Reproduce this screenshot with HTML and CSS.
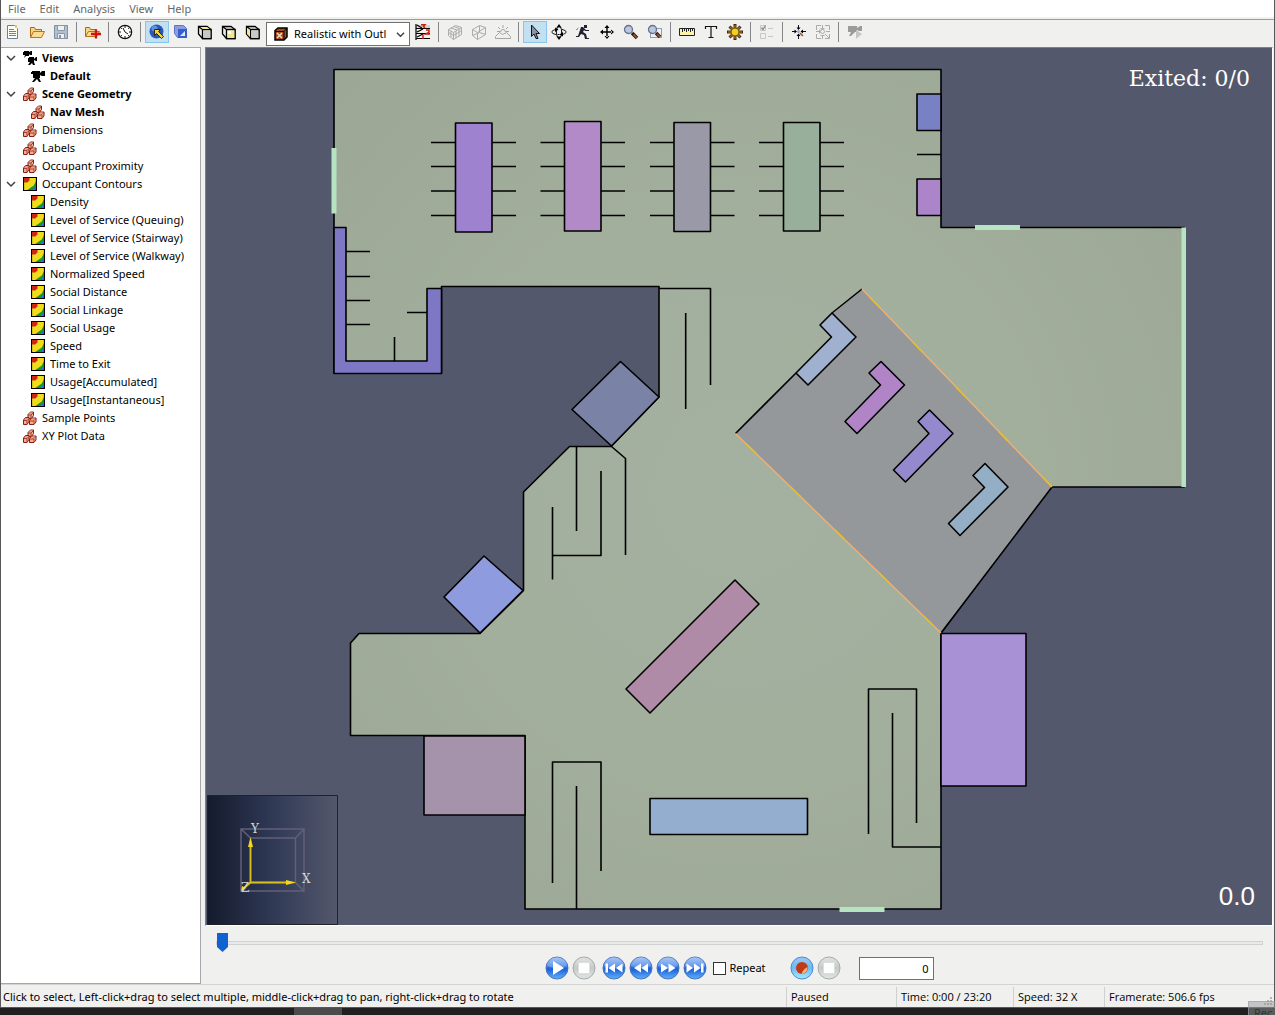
FILE: index.html
```html
<!DOCTYPE html>
<html lang="en">
<head>
<meta charset="utf-8">
<title>Results viewer</title>
<link rel="stylesheet" href="styles.css">
</head>
<body>
<svg class="sprite" aria-hidden="true">
  <defs>
    <linearGradient id="blueGlass" x1="0" y1="0" x2="0" y2="1"><stop offset="0" stop-color="#8fb6f4"/><stop offset=".45" stop-color="#2f74e4"/><stop offset=".55" stop-color="#1b5fdc"/><stop offset="1" stop-color="#5fb4fa"/></linearGradient>
    <linearGradient id="greyGlass" x1="0" y1="0" x2="0" y2="1"><stop offset="0" stop-color="#e2e4e2"/><stop offset=".5" stop-color="#c6cac7"/><stop offset="1" stop-color="#dfe5e6"/></linearGradient>
    <linearGradient id="cyanGlass" x1="0" y1="0" x2="0" y2="1"><stop offset="0" stop-color="#9cc8f2"/><stop offset=".5" stop-color="#6db9f5"/><stop offset="1" stop-color="#a4ecff"/></linearGradient>
    <g id="cubeArt"><path d="M1.500 2.500v7.500l4 4.500h8.500v-9l-4-3z" fill="#e9e9e4" stroke="#000" stroke-width="1.300"/><path d="M5.500 5.500h8.500v9h-8.500zM1.500 2.500l4 3" stroke="#000" stroke-width="1.300"/></g>
  </defs>
  <symbol id="i-blocks" viewBox="0 0 14 14"><g fill="#f0b088" stroke="#8c1c1c" stroke-linejoin="round"><path d="M5 3.500l2.500-2.500h3l0 3.500-2 3H5z"/><path d="M.5 9l2-2.500h3.500v4l-2 3H.5z"/><path d="M6.500 9.500l2-2.500h4.500v4l-2 2.500H6.500z"/></g><path fill="none" stroke="#a8412f" d="M5 4h3v3M8 4l2-2M1 9.500h3v4M4 9.500l2-2M7 10h4v3M11 9.500l2-2"/><path fill="#d8a0a0" d="M6 3l1.500-1.500H10L8 3.300zM2 8.500L3 7h2.500L4 8.800zM8 9l1-1.500h3L11 9z"/></symbol>
  <symbol id="i-contour" viewBox="0 0 13 13"><path fill="#169a1c" d="M0 0h13v13H0z"/><path fill="#f1dc1c" d="M1 1h11v3l-2 4-3 2-3 2H1z"/><path fill="#d22414" d="M1 1h5v2L4 5H1z"/><path fill="#2a6ff0" d="M12 8v4H8z"/><path fill="none" stroke="#000" d="M.5.5h12v12H.5z"/></symbol>
  <symbol id="i-camera" viewBox="0 0 14 12"><path d="M1 1h8v2l2-2h3v5h-3L9 5v3H8l2 4H8L6 9l-3 3H1l3-4H2V4H0V2h1z"/></symbol>
  <symbol id="i-cameras" viewBox="0 0 14 14"><path d="M1 0h5v1l2-1h1v4H7L6 3v2H3L1 7l1-3H0V1h1zM6 6h5v2l2-2h1v4h-1l-2-1v2l1 3h-2l-1-2-2 2H5l2-3H5V7h1z"/></symbol>
  <symbol id="i-doc" viewBox="0 0 16 16"><path fill="#fffef4" stroke="#6e7f9d" d="M2.500 1.500h7l3 3v10h-10z"/><path fill="#e7c765" d="M10 1h2v3h-2z"/><path stroke="#5c80c4" d="M4 5.500h5M4 7.500h7M4 9.500h7M4 11.500h7"/></symbol>
  <symbol id="i-open" viewBox="0 0 16 16"><path fill="#f5d488" stroke="#a76b1d" d="M1.500 13.500v-10h4l1 2h6v3"/><path fill="#ffda91" stroke="#b8741c" d="M1.500 13.500l3-6h11l-3 6z"/></symbol>
  <symbol id="i-save" viewBox="0 0 16 16"><path fill="#b4c0ce" stroke="#8090a2" d="M1.500 1.500h13v13h-13z"/><path fill="#eef1f2" stroke="#8796a8" d="M4.500 1.500h7v5h-7zM4.500 9.500h7v5h-7z"/><path fill="#8796a8" d="M6 11h2v3H6z"/></symbol>
  <symbol id="i-import" viewBox="0 0 16 16"><path fill="#f5d488" stroke="#a76b1d" d="M.5 12.500v-9h4l1 2h6v3"/><path fill="#ffda91" stroke="#b8741c" d="M.5 12.500l3-5h11l-3 5z"/><path d="M11 5.500v9M6 10h10" stroke="#d01414" stroke-width="2.400"/></symbol>
  <symbol id="i-clock" viewBox="0 0 16 16"><circle cx="8" cy="8" r="6.700" fill="#fff" stroke="#111" stroke-width="1.200"/><path fill="none" stroke="#111" d="M8 2v2M8 12v2M2 8h2M12 8h2M3.800 3.800l1 1M12.200 3.800l-1 1M3.800 12.200l1-1M12.200 12.200l-1-1M6 4l2 4 3 2"/></symbol>
  <symbol id="i-orb" viewBox="0 0 16 16"><circle cx="7.500" cy="7.500" r="7" fill="#2858b8"/><circle cx="5.500" cy="4.500" r="3" fill="#5c91e0"/><path fill="#f3d43c" stroke="#31280a" d="M5.500 5.500h6l-2 2 5 5-2 2-5-5-2 2z"/></symbol>
  <symbol id="i-bluecube" viewBox="0 0 16 16"><path fill="#8c9be2" stroke="#6074c6" d="M1.500 1.500h9l3 3v9h-9l-3-4z"/><path fill="#3460cc" d="M5 5h9v9H5z"/><path fill="#dce6ff" d="M7 12l5-5v5z"/></symbol>
  <symbol id="i-cubetop" viewBox="0 0 16 16"><g fill="none"><use href="#cubeArt"/><path fill="#c8c8c6" d="M6.500 6.500h7v7.500h-7z"/><path fill="#f4e68c" d="M3.500 3h6.500l2.500 2H6z"/></g></symbol>
  <symbol id="i-cubefront" viewBox="0 0 16 16"><g fill="none"><use href="#cubeArt"/><path fill="#f4e68c" d="M6.500 6.500h7v7.500h-7z"/><path fill="#fff" d="M7 7h3v3H7z"/></g></symbol>
  <symbol id="i-cubeside" viewBox="0 0 16 16"><g fill="none"><use href="#cubeArt"/><path fill="#c8c8c6" d="M6.500 6.500h7v7.500h-7z"/><path fill="#f4e68c" d="M2 4L5 6v7l-3-3z"/></g></symbol>
  <symbol id="i-brick" viewBox="0 0 14 14"><path fill="#a24c1d" stroke="#000" stroke-width="1.500" d="M1 3.500L4 1h9v9l-3 3H1z"/><path fill="none" stroke="#000" d="M1 4.500h9V13M10 4.500L13 1"/><path stroke="#f5d9c4" stroke-width="1.500" d="M3 6l5 5M8 6l-5 5"/></symbol>
  <symbol id="i-levels" viewBox="0 0 16 16"><path fill="#d2d2d0" d="M1 1h14v3H1z"/><path fill="none" stroke="#000" stroke-width="1.200" d="M1 0v16M1 4.500h14M1 9.500h14M1 14.500h14M2 1l5 3M2 8l6-3M2 13l6-3"/><path fill="none" stroke="#d01c10" stroke-width="1.500" d="M6 .8h4L8.500 2.500 10 4M11 6h3v2l-3 2h4M8 10.500V15"/></symbol>
  <symbol id="i-wiremesh" viewBox="0 0 16 16"><path fill="none" stroke="#a9adaa" d="M1.500 5.500l5 3v7l-5-4zM1.500 5.500l7-4 6 2v7l-8 5M6.500 8.500l8-5M4 7v6M1.500 8.500l5 3 8-5M9 7v7M12 5v7M4 4l6 2M7 2.500l5 2"/></symbol>
  <symbol id="i-wire" viewBox="0 0 16 16"><path fill="none" stroke="#a9adaa" d="M1.500 5.500l5 3v7l-5-4zM1.500 5.500l7-4 6 2v7l-8 5M6.500 8.500l8-5M8.500 1.500v7l-7 3M8.500 8.500l6 2"/></symbol>
  <symbol id="i-sunrise" viewBox="0 0 16 16"><path fill="none" stroke="#a3a6a4" d="M.5 14.500v-2l4-4 3 2 4-2 4 4v2zM8 1v3M3 3l2 2M13 3l-2 2M2 7.500h3M11 7.500h3M5.500 8a2.500 2.500 0 015 0"/></symbol>
  <symbol id="i-arrow" viewBox="0 0 16 16"><path fill="#8c8fa6" stroke="#111" d="M4.500 1v11.500l2.500-2.500 2 4.500h2l-2-5h3.500z"/></symbol>
  <symbol id="i-orbit" viewBox="0 0 16 16"><path fill="none" stroke="#111" d="M6.500 3C5 5 5 11 6.500 13M9.500 3c1.500 2 1.500 8 0 10M5 10.500C-.5 9.500-.5 6.500 5 5.500M11 5.500c5.500 1 5.500 4 0 5M6.500 10.500h2"/><path d="M4 3.500l3.500 2L4 8zM12 12.500L8.500 10.500 12 8zM5.500 3.500h5L8 0zM5.500 12.500h5L8 16z"/></symbol>
  <symbol id="i-run" viewBox="0 0 16 16"><path fill="#222131" d="M9 1h3v3H9zM4 3h4l3 3h3v1h-4L9 6 8 8l3 2 1 4h2v1h-4l-1-4-3-1-2 3H1v-1h2l2-6 1-3H4L2 6H1z"/></symbol>
  <symbol id="i-move" viewBox="0 0 16 16"><path d="M7.300 3h1.400v10H7.300zM3 7.300h10v1.400H3zM8 1l2.500 3h-5zM8 15l2.500-3h-5zM1 8l3-2.500v5zM15 8l-3-2.500v5z"/></symbol>
  <symbol id="i-zoom" viewBox="0 0 16 16"><path stroke="#321c14" stroke-width="3.600" d="M9 9l5 5"/><path stroke="#9a5a33" stroke-width="1.600" d="M10.500 10.500l3 3"/><circle cx="5.500" cy="5.500" r="4" fill="#b9c8e0" stroke="#69728c" stroke-width="1.300"/></symbol>
  <symbol id="i-zoombox" viewBox="0 0 16 16"><path fill="none" stroke="#344b8c" stroke-dasharray="1 1" d="M3.500 4.500h11v9h-11z"/><path stroke="#321c14" stroke-width="3.600" d="M9 9l4 4"/><path stroke="#9a5a33" stroke-width="1.600" d="M10 10l3 3"/><circle cx="5.500" cy="5.500" r="4" fill="#b9c8e0" stroke="#69728c" stroke-width="1.300"/></symbol>
  <symbol id="i-ruler" viewBox="0 0 16 16"><path fill="#fdf3ae" stroke="#222" d="M.5 4.500h15v7H.5z"/><path stroke="#222" d="M3.500 5v3M5.500 5v2M7.500 5v3M9.500 5v2M11.500 5v3M13.500 5v2"/></symbol>
  <symbol id="i-type" viewBox="0 0 16 16"><path fill="none" stroke="#111" stroke-width="1.200" d="M2.500 5V2.500h11V5M8 2.500v11M5.500 13.500h5"/></symbol>
  <symbol id="i-gear" viewBox="0 0 16 16"><path stroke="#3b2a10" stroke-width="3" d="M8 0v16M0 8h16M2.500 2.500l11 11M13.500 2.500l-11 11"/><path stroke="#a4641e" stroke-width="1.400" d="M8 1v14M1 8h14M3 3l10 10M13 3L3 13"/><circle cx="8" cy="8" r="4" fill="#f4cf1c" stroke="#6c5310"/></symbol>
  <symbol id="i-checks" viewBox="0 0 16 16"><path fill="none" stroke="#c3c8c4" d="M1.500 1.500h5v5h-5zM1.500 9.500h5v5h-5zM9 4.500h5M9 12.500h5"/><path fill="none" stroke="#8b8f8c" stroke-width="1.400" d="M2.500 3.500l1.500 2 2.500-4"/></symbol>
  <symbol id="i-focus" viewBox="0 0 16 16"><path stroke="#111" d="M7.500 1v4M7.500 11v4M1 7.500h4M11 7.500h4"/><path d="M5.500 3.500h4L7.500 6zM5.500 12h4l-2-2.500zM3.500 5.500v4L6 7.500zM12 5.500v4L9.500 7.500z"/><circle cx="7.500" cy="7.500" r="1.500" fill="#93a9cf"/><path stroke="#8f5937" stroke-width="1.500" d="M9 9l3 3"/></symbol>
  <symbol id="i-expand" viewBox="0 0 16 16"><path fill="none" stroke="#a9adaa" d="M1.500 6V1.500H6M10 1.500h4.500V6M14.500 10v4.500H10M6 14.500H1.500V10M7.500 1v4M7.500 11v4M1 7.500h4M11 7.500h4M5.500 4.500h4M5.500 11.500h4M4.500 5.500v4M10 10l4 4"/><circle cx="7.500" cy="7.500" r="2" fill="none" stroke="#a9adaa"/></symbol>
  <symbol id="i-greycam" viewBox="0 0 16 16"><path fill="#9a9c9a" d="M1 2h9v2l3-2h2v5h-3l-2-1v2H8l-4 4H2l2-4H1z"/><path fill="#c4c6c4" d="M9 6l6 4-6 5z"/></symbol>
  <symbol id="i-chev" viewBox="0 0 10 10"><path fill="none" stroke="#404040" stroke-width="1.500" d="M1 3l4 4 4-4"/></symbol>
  <symbol id="p-blue" viewBox="0 0 24 24"><circle cx="12" cy="12" r="11" fill="url(#blueGlass)" stroke="#4a74b8"/><path fill="#fff" opacity=".25" d="M2 10a10 9 0 0120 0q-10 4-20 0z"/></symbol>
  <symbol id="p-grey" viewBox="0 0 24 24"><circle cx="12" cy="12" r="11" fill="url(#greyGlass)" stroke="#a6abab"/><path fill="#fdfdfd" stroke="#dcdede" d="M6.500 6.500h11v11h-11z"/></symbol>
</svg>

<div class="window">
  <nav class="menubar" aria-label="Main menu">
    <button type="button">File</button><button type="button">Edit</button><button type="button">Analysis</button><button type="button">View</button><button type="button">Help</button>
  </nav>

  <div class="toolbar" role="toolbar" aria-label="Tools">
    <button type="button" class="tool" aria-label="New"><svg><use href="#i-doc"/></svg></button>
    <button type="button" class="tool" aria-label="Open"><svg><use href="#i-open"/></svg></button>
    <button type="button" class="tool" aria-label="Save"><svg><use href="#i-save"/></svg></button>
    <span class="sep"></span>
    <button type="button" class="tool" aria-label="Import"><svg><use href="#i-import"/></svg></button>
    <span class="sep"></span>
    <button type="button" class="tool" aria-label="Time"><svg><use href="#i-clock"/></svg></button>
    <span class="sep"></span>
    <button type="button" class="tool active" aria-label="Select objects"><svg><use href="#i-orb"/></svg></button>
    <button type="button" class="tool" aria-label="Solid"><svg><use href="#i-bluecube"/></svg></button>
    <button type="button" class="tool" aria-label="Top view"><svg><use href="#i-cubetop"/></svg></button>
    <button type="button" class="tool" aria-label="Front view"><svg><use href="#i-cubefront"/></svg></button>
    <button type="button" class="tool" aria-label="Side view"><svg><use href="#i-cubeside"/></svg></button>
    <label class="mode">
      <svg class="mode-icon"><use href="#i-brick"/></svg>
      <select aria-label="Render mode"><option>Realistic with Outl</option></select>
      <svg class="mode-chev"><use href="#i-chev"/></svg>
    </label>
    <button type="button" class="tool" aria-label="Floors"><svg><use href="#i-levels"/></svg></button>
    <span class="sep"></span>
    <button type="button" class="tool" aria-label="Mesh"><svg><use href="#i-wiremesh"/></svg></button>
    <button type="button" class="tool" aria-label="Wireframe"><svg><use href="#i-wire"/></svg></button>
    <button type="button" class="tool" aria-label="Lighting"><svg><use href="#i-sunrise"/></svg></button>
    <span class="sep"></span>
    <button type="button" class="tool active" aria-label="Select"><svg><use href="#i-arrow"/></svg></button>
    <button type="button" class="tool" aria-label="Orbit"><svg><use href="#i-orbit"/></svg></button>
    <button type="button" class="tool" aria-label="Roam"><svg><use href="#i-run"/></svg></button>
    <button type="button" class="tool" aria-label="Pan"><svg><use href="#i-move"/></svg></button>
    <button type="button" class="tool" aria-label="Zoom"><svg><use href="#i-zoom"/></svg></button>
    <button type="button" class="tool" aria-label="Zoom box"><svg><use href="#i-zoombox"/></svg></button>
    <span class="sep"></span>
    <button type="button" class="tool" aria-label="Measure"><svg><use href="#i-ruler"/></svg></button>
    <button type="button" class="tool" aria-label="Text label"><svg><use href="#i-type"/></svg></button>
    <button type="button" class="tool" aria-label="Settings"><svg><use href="#i-gear"/></svg></button>
    <span class="sep"></span>
    <button type="button" class="tool" aria-label="Options"><svg><use href="#i-checks"/></svg></button>
    <span class="sep"></span>
    <button type="button" class="tool" aria-label="Focus selected"><svg><use href="#i-focus"/></svg></button>
    <button type="button" class="tool" aria-label="Fit all"><svg><use href="#i-expand"/></svg></button>
    <span class="sep"></span>
    <button type="button" class="tool" aria-label="Camera"><svg><use href="#i-greycam"/></svg></button>
  </div>

  <div class="main">
    <aside class="tree" aria-label="Navigation">
      <ul>
        <li class="row bold"><svg class="chev"><use href="#i-chev"/></svg><svg class="ico"><use href="#i-cameras"/></svg>Views</li>
        <li class="row bold child"><span class="chev"></span><svg class="ico"><use href="#i-camera"/></svg>Default</li>
        <li class="row bold"><svg class="chev"><use href="#i-chev"/></svg><svg class="ico"><use href="#i-blocks"/></svg>Scene Geometry</li>
        <li class="row bold child"><span class="chev"></span><svg class="ico"><use href="#i-blocks"/></svg>Nav Mesh</li>
        <li class="row"><span class="chev"></span><svg class="ico"><use href="#i-blocks"/></svg>Dimensions</li>
        <li class="row"><span class="chev"></span><svg class="ico"><use href="#i-blocks"/></svg>Labels</li>
        <li class="row"><span class="chev"></span><svg class="ico"><use href="#i-blocks"/></svg>Occupant Proximity</li>
        <li class="row"><svg class="chev"><use href="#i-chev"/></svg><svg class="ico"><use href="#i-contour"/></svg>Occupant Contours</li>
        <li class="row child"><span class="chev"></span><svg class="ico"><use href="#i-contour"/></svg>Density</li>
        <li class="row child"><span class="chev"></span><svg class="ico"><use href="#i-contour"/></svg>Level of Service (Queuing)</li>
        <li class="row child"><span class="chev"></span><svg class="ico"><use href="#i-contour"/></svg>Level of Service (Stairway)</li>
        <li class="row child"><span class="chev"></span><svg class="ico"><use href="#i-contour"/></svg>Level of Service (Walkway)</li>
        <li class="row child"><span class="chev"></span><svg class="ico"><use href="#i-contour"/></svg>Normalized Speed</li>
        <li class="row child"><span class="chev"></span><svg class="ico"><use href="#i-contour"/></svg>Social Distance</li>
        <li class="row child"><span class="chev"></span><svg class="ico"><use href="#i-contour"/></svg>Social Linkage</li>
        <li class="row child"><span class="chev"></span><svg class="ico"><use href="#i-contour"/></svg>Social Usage</li>
        <li class="row child"><span class="chev"></span><svg class="ico"><use href="#i-contour"/></svg>Speed</li>
        <li class="row child"><span class="chev"></span><svg class="ico"><use href="#i-contour"/></svg>Time to Exit</li>
        <li class="row child"><span class="chev"></span><svg class="ico"><use href="#i-contour"/></svg>Usage[Accumulated]</li>
        <li class="row child"><span class="chev"></span><svg class="ico"><use href="#i-contour"/></svg>Usage[Instantaneous]</li>
        <li class="row"><span class="chev"></span><svg class="ico"><use href="#i-blocks"/></svg>Sample Points</li>
        <li class="row"><span class="chev"></span><svg class="ico"><use href="#i-blocks"/></svg>XY Plot Data</li>
      </ul>
    </aside>

    <section class="viewer">
      <div class="stage">
        <svg class="plan" viewBox="206 48 1066 875" preserveAspectRatio="xMidYMin meet" role="img" aria-label="Floor plan">
          <defs>
            <radialGradient id="floor" gradientUnits="userSpaceOnUse" cx="740" cy="490" r="560"><stop offset="0" stop-color="#a3b1a1"/><stop offset=".5" stop-color="#a3af9d"/><stop offset="1" stop-color="#9ca895"/></radialGradient>
          </defs>
          <g class="outlined">
            <path fill="url(#floor)" d="M334 69.500H941V227.500H1184V487H1051L941 633V909H525V735.500H350.500V643L359 633.500H480L523.500 590.500V492L569.500 446.500H611L659 397V286.500H441.500V373H334z"/>
            <path fill="#7e77c3" d="M334 227.500H346V361H427V288.500H441.500V373.500H334z"/>
            <path fill="#9f82cf" d="M455.500 123H492V232H455.500z"/>
            <path fill="#b18ac7" d="M564.500 121.500H601V231H564.500z"/>
            <path fill="#9999a7" d="M674 122.500H710.500V231.500H674z"/>
            <path fill="#98b09b" d="M783.500 122.500H820V231H783.500z"/>
            <path fill="#7881c4" d="M917 94H941V130.500H917z"/>
            <path fill="#ac84ca" d="M917 179H941V215.500H917z"/>
            <path fill="#7a82a5" d="M620.500 361.500L659 397L611.500 446L572 409.500z"/>
            <path fill="#8e9bdf" d="M484 556L523 590.500L480 633L444 597z"/>
            <path fill="#a593ac" d="M424 736H525V815H424z"/>
            <path fill="#94aecf" d="M650 798.500H807.500V834.500H650z"/>
            <path fill="#b08ba8" d="M735 580L759 604L650 713L626 689z"/>
            <path fill="#a892d5" d="M941 633.500H1026V786H941z"/>
          </g>
          <path fill="#95989b" d="M862 289L1052 487L941 633L735 433.500L796 373L820 325z"/>
          <path fill="url(#floor)" d="M796 373L831.500 337L820 325L800 345z"/>
          <g class="outlined">
            <path fill="none" d="M862 289L832 313M796 373L735.500 433.500M1052 487L941 633"/>
            <path fill="#a0b1d0" d="M832 313L856 337L808 385L796 373L831.500 337L820 325z"/>
            <path fill="#b184c8" d="M881 361.500L904.500 385L857 433.500L845 421.500L880.500 385L869 373z"/>
            <path fill="#9489cd" d="M929.500 410L953 433.500L905.500 482L893.500 470L929 433.500L918 421.500z"/>
            <path fill="#93aec5" d="M985 463.500L1008 487L960 535.500L948.500 523.500L984.500 487.500L973 475.500z"/>
            <path fill="none" d="M431 142.500h24M431 166.500h24M431 191h24M431 215.500h24M492 142.500h24M492 166.500h24M492 191h24M492 215.500h24M540.500 142.500h24M540.500 166.500h24M540.500 191h24M540.500 215.500h24M601 142.500h24M601 166.500h24M601 191h24M601 215.500h24M650 142.500h24M650 166.500h24M650 191h24M650 215.500h24M710.500 142.500h24M710.500 166.500h24M710.500 191h24M710.500 215.500h24M759 142.500h24M759 166.500h24M759 191h24M759 215.500h24M820 142.500h24M820 166.500h24M820 191h24M820 215.500h24M917 154.500h24"/>
            <path fill="none" d="M346 251.500h24M346 276.500h24M346 300.500h24M346 324.500h24M407 312.500h20M394.500 337v24"/>
            <path fill="none" d="M659 288.500H710.500V385M685.700 313v96"/>
            <path fill="none" d="M611.500 446.500L625.500 458.500V555M576.500 446.500V531M601 471V555.500H552.500M552.500 507V579.500"/>
            <path fill="none" d="M552.500 883V762H601V871M576.500 786V909"/>
            <path fill="none" d="M868.500 834V689H916.500V823M892.500 713V847H941"/>
          </g>
          <path fill="none" stroke="#efb071" stroke-width="1.400" d="M862 289L1052 487M735.500 433.500L941 633"/>
          <path fill="none" stroke="#e8bf22" stroke-width="1.400" stroke-dasharray="14 48" d="M870 297.500L1052 487M746 443.500L941 633"/>
          <path fill="#b6e4c0" d="M331.500 148h5v65.500h-5zM975 225h45v5h-45zM1181.500 227.500h4.500V487h-4.500zM839.500 907h45v5h-45z"/>
        </svg>
        <div class="exited">Exited: 0/0</div>
        <div class="clock">0.0</div>
        <svg class="gizmo" viewBox="0 0 131 130" role="img" aria-label="Axes">
          <defs><linearGradient id="giz"><stop offset="0" stop-color="#141b2d"/><stop offset=".5" stop-color="#303955"/><stop offset="1" stop-color="#54586c"/></linearGradient></defs>
          <path fill="url(#giz)" stroke="#202224" d="M.5.5h130v129H.5z"/>
          <path fill="none" stroke="#625f78" stroke-width="1.500" d="M34 34h63v62H34zM43.500 43h45v44.500h-45zM34 34l9.500 9M97 34l-8.500 9M97 96l-8.500-8.500M34 96l9.500-8.500"/>
          <path fill="none" stroke="#d8bf22" stroke-width="1.800" d="M43.500 50V87.500H82M43.500 87.500L37 93"/>
          <path fill="#f5d71c" d="M43.500 42l2.500 10h-5zM89 87.500l-10-2.500v5zM34 96l1-5 4 2z"/>
          <text x="44" y="38">Y</text><text x="95" y="88">X</text><text x="34" y="97">Z</text>
        </svg>
      </div>

      <div class="player">
        <input class="timeline" type="range" min="0" max="1400" value="0" aria-label="Timeline">
        <div class="controls">
          <div class="group">
            <button type="button" class="round" aria-label="Play"><svg viewBox="0 0 24 24"><use href="#p-blue"/><path fill="#fff" d="M8 5l11 7-11 7z"/></svg></button>
            <button type="button" class="round" aria-label="Stop"><svg viewBox="0 0 24 24"><use href="#p-grey"/></svg></button>
          </div>
          <div class="group">
            <button type="button" class="round" aria-label="Go to start"><svg viewBox="0 0 24 24"><use href="#p-blue"/><path fill="#fff" d="M3.500 7.500H6v9H3.500zM13 7.500v9L6.500 12zM20.500 7.500v9L14 12z"/></svg></button>
            <button type="button" class="round" aria-label="Rewind"><svg viewBox="0 0 24 24"><use href="#p-blue"/><path fill="#fff" d="M12 7.500v9L5 12zM19 7.500v9L12.500 12z"/></svg></button>
            <button type="button" class="round" aria-label="Fast forward"><svg viewBox="0 0 24 24"><use href="#p-blue"/><path fill="#fff" d="M5 7.500v9l7-4.500zM12.500 7.500v9l7-4.500z"/></svg></button>
            <button type="button" class="round" aria-label="Go to end"><svg viewBox="0 0 24 24"><use href="#p-blue"/><path fill="#fff" d="M18 7.500h2.500v9H18zM3.500 7.500v9L10 12zM11 7.500v9l6.500-4.500z"/></svg></button>
          </div>
          <label class="repeat"><input type="checkbox">Repeat</label>
          <div class="group record">
            <button type="button" class="round" aria-label="Record"><svg viewBox="0 0 24 24"><circle cx="12" cy="12" r="11" fill="url(#cyanGlass)" stroke="#4a8ad0"/><circle cx="12" cy="12" r="6" fill="#c23a14"/><path fill="#f3b277" d="M17.500 11a6 6 0 01-6 7q1-4 6-7z"/></svg></button>
            <button type="button" class="round" aria-label="Stop recording"><svg viewBox="0 0 24 24"><use href="#p-grey"/></svg></button>
          </div>
          <input class="frame" type="text" value="0" aria-label="Frame">
        </div>
      </div>
    </section>
  </div>

  <footer class="status">
    <span class="hint">Click to select, Left-click+drag to select multiple, middle-click+drag to pan, right-click+drag to rotate</span>
    <span>Paused</span>
    <span>Time: 0:00 / 23:20</span>
    <span>Speed: 32 X</span>
    <span>Framerate: 506.6 fps</span>
    <svg class="grip" viewBox="0 0 10 10" aria-hidden="true"><path fill="#b4b4b4" d="M7 0h2v2H7zM7 3h2v2H7zM4 3h2v2H4zM7 6h2v2H7zM4 6h2v2H4zM1 6h2v2H1z"/></svg>
  </footer>
</div>
<div class="taskbar"><span class="task"></span><span class="popup">Rec</span></div>
</body>
</html>
```
FILE: styles.css
```css
* { box-sizing: border-box; }

body {
  margin: 0;
  min-height: 100vh;
  display: flex;
  flex-direction: column;
  font: 11px/18px "Noto Sans", "Open Sans", sans-serif;
  color: #000;
  background: #1f201f;
}

button, input, select { font: inherit; color: inherit; margin: 0; }
svg { display: block; }
.sprite { position: absolute; width: 0; height: 0; }

.window {
  flex: 1;
  display: flex;
  flex-direction: column;
  background: #f0f0ee;
  border: solid #58585c;
  border-width: 0 1px 1px;
}

/* menu and toolbar */
.menubar { display: flex; height: 17px; background: #fff; margin-bottom: 2px; }
.menubar button {
  border: 0;
  padding: 0 7px;
  background: none;
  color: #666;
  line-height: 17px;
}

.toolbar {
  display: flex;
  align-items: flex-start;
  height: 28px;
  padding-top: 1px;
  border-top: 1px solid #9c9c9c;
}
.tool {
  width: 24px;
  height: 22px;
  flex: none;
  display: grid;
  place-items: center;
  padding: 0;
  border: 1px solid transparent;
  background: none;
}
.tool.active { background: #c2e0f0; border-color: #88c4ee; }
.tool svg { width: 16px; height: 16px; }
.sep { flex: none; width: 8px; height: 20px; margin-top: 1px; padding-left: 3px; }
.sep::before { content: ""; display: block; width: 1px; height: 100%; background: #85858a; }

.mode {
  flex: none;
  display: flex;
  align-items: center;
  width: 144px;
  height: 24px;
  margin: 1px 1px 0;
  padding: 0 4px 0 7px;
  background: #fff;
  border: 1px solid #707070;
}
.mode-icon { flex: none; width: 14px; height: 14px; }
.mode-chev { flex: none; width: 9px; height: 9px; }
.mode select {
  flex: 1;
  min-width: 0;
  padding: 0 0 0 6px;
  border: 0;
  background: none;
  appearance: none;
}

/* tree */
.main { flex: 1; display: flex; gap: 4px; }
.tree {
  flex: none;
  width: 200px;
  padding-top: 1px;
  background: #fff;
  border: 1px solid #a6a6ac;
  border-left: 0;
}
.tree ul { list-style: none; margin: 0; padding: 0; }
.row { display: flex; align-items: center; height: 18px; padding-left: 5px; white-space: nowrap; }
.row.child { padding-left: 13px; }
.bold { font-weight: 700; }
.chev { flex: none; width: 10px; height: 10px; margin-right: 7px; }
.ico { flex: none; width: 14px; height: 14px; margin-right: 5px; }

/* 3D view */
.viewer { flex: 1; min-width: 0; display: flex; flex-direction: column; }
.stage {
  position: relative;
  flex: 1;
  min-height: 300px;
  margin-right: 1px;
  background: #54586c;
  border: 1px solid #fff;
  border-top-color: #80807c;
  border-left-color: #80807c;
}
.plan { position: absolute; inset: 0; width: 100%; height: 100%; }
.outlined { stroke: #000; stroke-width: 1.600; stroke-linejoin: round; }
.exited {
  position: absolute;
  top: 18px;
  right: 22px;
  font: 22px/26px "DejaVu Serif", serif;
  color: #fff;
}
.clock {
  position: absolute;
  right: 17px;
  bottom: 14px;
  font: 26px/30px "Liberation Sans", sans-serif;
  color: #fff;
}
.gizmo { position: absolute; left: 1px; bottom: 0; width: 131px; height: 130px; }
.gizmo text { font: 12px "DejaVu Serif", serif; fill: #d6d6d6; }

/* playback */
.player { padding: 7px 11px 4px; }
.timeline {
  appearance: none;
  display: block;
  width: 100%;
  height: 20px;
  background: none;
}
.timeline::-webkit-slider-runnable-track {
  height: 4px;
  background: #e7eaea;
  border: 1px solid #d0d2d2;
}
.timeline::-webkit-slider-thumb {
  appearance: none;
  width: 11px;
  height: 19px;
  margin-top: -9px;
  background: #0f62d0;
  clip-path: polygon(0 0, 100% 0, 100% 74%, 50% 100%, 0 74%);
}
.controls { display: flex; justify-content: center; align-items: center; gap: 6px; margin-top: 3px; height: 24px; }
.group { display: flex; gap: 3px; }
.round { width: 24px; height: 24px; padding: 0; border: 0; background: none; }
.round svg { width: 24px; height: 24px; }
.repeat { display: flex; align-items: center; gap: 3px; }
.repeat input { appearance: none; width: 13px; height: 13px; background: #fff; border: 1px solid #333; }
.record { margin-left: 18px; }
.frame {
  width: 75px;
  height: 23px;
  margin-left: 12px;
  padding: 0 4px;
  text-align: right;
  background: #fff;
  border: 1px solid #707070;
}

/* status bar */
.status {
  position: relative;
  display: grid;
  grid-template-columns: 1fr 110px 117px 91px 170px;
  height: 23px;
  padding-top: 2px;
  border-top: 1px solid #d4d4d4;
  font-family: "Open Sans", "Noto Sans", sans-serif;
  line-height: 20px;
  white-space: nowrap;
}
.status span { padding-left: 4px; border-left: 1px solid #d0d0d0; overflow: hidden; }
.status .hint { padding-left: 2px; border-left: 0; font-family: "Noto Sans", "Open Sans", sans-serif; }
.grip { position: absolute; right: 1px; bottom: 0; width: 10px; height: 10px; }

.taskbar { position: relative; display: flex; height: 7px; }
.task { width: 48px; margin-left: 294px; background: #4c4b4b; }
.popup {
  position: absolute;
  right: 0;
  bottom: 0;
  width: 27px;
  height: 14px;
  padding-left: 5px;
  border: 1px solid rgba(150, 160, 175, .6);
  border-width: 1px 0 0 1px;
  background: rgba(150, 152, 152, .5);
  color: #333;
  line-height: 22px;
  overflow: hidden;
}
```
